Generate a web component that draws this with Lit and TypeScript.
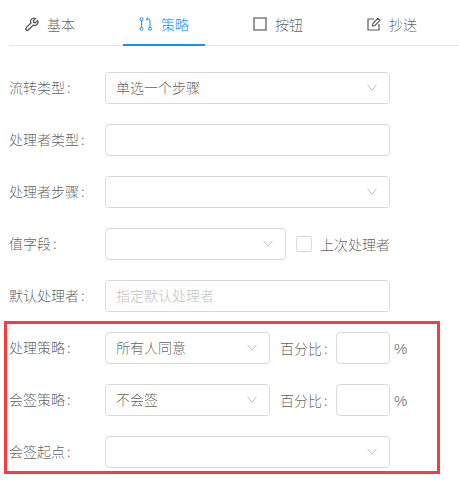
import { LitElement, html, css, svg } from "lit";
import { customElement } from "lit/decorators.js";

const chevron = html`<svg class="chev" viewBox="0 0 10 7" width="10" height="7"><path d="M.5.8 5 6.200 9.500.8" fill="none" stroke="currentColor" stroke-width="1"/></svg>`;

const icons = {
  tool: svg`<path d="M12.6 3.6 10.4 5.7 8.7 5.4 8.4 3.7 10.5 1.5C9 .8 7.3 1.2 6.3 2.4 5.5 3.4 5.3 4.8 5.9 6L1.3 10.6C.7 11.2.7 12.2 1.3 12.8 1.9 13.4 2.9 13.4 3.5 12.8L8.100 8.200C9.300 8.700 10.700 8.500 11.700 7.700 12.900 6.700 13.300 5.100 12.600 3.600Z" fill="none" stroke="currentColor" stroke-width="1.300"/>`,
  flow: svg`<g fill="none" stroke="currentColor" stroke-width="1"><circle cx="2.500" cy="2.200" r="1.500"/><circle cx="2.500" cy="11.800" r="1.500"/><circle cx="11" cy="11.800" r="1.500"/><path d="M2.500 3.700V10.300"/><path d="M11 10.300V3.200C11 2.500 10.500 2 9.800 2H7.500"/><path d="M9 .5 7.300 2 9 3.500"/></g>`,
  box: svg`<rect x="1" y="1" width="12" height="12" fill="none" stroke="currentColor" stroke-width="1.200"/>`,
  edit: svg`<g fill="none" stroke="currentColor" stroke-width="1.200"><path d="M7 2H1V13H12V7"/><path d="M5.500 9 5.900 6.500 10.900 1.300 13 3.300 8 8.500Z"/></g>`,
};

@customElement("app-root")
export class AppRoot extends LitElement {
  static styles = css`
    :host {
      display: block;
      position: relative;
      width: 459px;
      height: 484px;
      background: #fff;
      overflow: hidden;
      font-family: "Noto Sans CJK SC", "Noto Sans", sans-serif;
      font-size: 14px;
      font-weight: 300;
      color: rgba(0, 0, 0, 0.65);
    }
    .tabs {
      display: flex;
      gap: 32px;
      height: 46px;
      margin-left: 9px;
      box-sizing: border-box;
      border-bottom: 1px solid #e8e8e8;
    }
    .tab {
      width: 82px;
      height: 46px;
      box-sizing: border-box;
      display: flex;
      align-items: center;
      justify-content: center;
      gap: 8px;
      padding-top: 2px;
      line-height: 20px;
    }
    .tab.active {
      color: #1890ff;
      border-bottom: 2px solid #1890ff;
      padding-top: 4px;
    }
    .tab svg { width: 14px; height: 14px; flex: none; }
    .form {
      display: flex;
      flex-direction: column;
      gap: 20px;
      margin-top: 26px;
      padding-left: 9px;
    }
    .row {
      display: flex;
      align-items: center;
      height: 32px;
    }
    .label {
      width: 96px;
      flex: none;
      line-height: 30px;
      height: 32px;
      white-space: nowrap;
    }
    .colon { margin-left: 2px; }
    .ctl {
      box-sizing: border-box;
      height: 32px;
      width: 285px;
      flex: none;
      border: 1px solid #d9d9d9;
      border-radius: 4px;
      padding: 0 12px 2px 10px;
      display: flex;
      align-items: center;
      justify-content: space-between;
      line-height: 28px;
      background: #fff;
    }
    .ctl.half { width: 181px; }
    .ctl.mid { width: 165px; }
    .ctl.small { width: 54px; }
    .ph { color: #bfbfbf; }
    .chev { color: #bfbfbf; flex: none; }
    .check {
      width: 16px;
      height: 16px;
      box-sizing: border-box;
      border: 1px solid #d9d9d9;
      border-radius: 2px;
      margin-left: 10px;
      flex: none;
    }
    .checktext { margin-left: 8px; white-space: nowrap; }
    .pct { margin-left: 10px; width: 56px; flex: none; white-space: nowrap; }
    .unit { margin-left: 4px; font-family: "Liberation Sans", sans-serif; font-weight: 400; font-size: 15px; color: rgba(0, 0, 0, 0.5); }
    .highlight {
      position: absolute;
      left: 4px;
      top: 321px;
      width: 436px;
      height: 153px;
      box-sizing: border-box;
      border: 3px solid #f73c3c;
      pointer-events: none;
    }
  `;

  private tab(icon: unknown, text: string, active = false) {
    return html`<div class="tab ${active ? "active" : ""}">
      <svg viewBox="0 0 14 14">${icon}</svg><span>${text}</span>
    </div>`;
  }

  private label(text: string) {
    return html`<span class="label">${text}<span class="colon">:</span></span>`;
  }

  render() {
    return html`
      <div class="tabs">
        ${this.tab(icons.tool, "基本")}
        ${this.tab(icons.flow, "策略", true)}
        ${this.tab(icons.box, "按钮")}
        ${this.tab(icons.edit, "抄送")}
      </div>
      <div class="form">
        <div class="row">${this.label("流转类型")}<div class="ctl"><span>单选一个步骤</span>${chevron}</div></div>
        <div class="row">${this.label("处理者类型")}<div class="ctl"></div></div>
        <div class="row">${this.label("处理者步骤")}<div class="ctl"><span></span>${chevron}</div></div>
        <div class="row">
          ${this.label("值字段")}<div class="ctl half"><span></span>${chevron}</div>
          <span class="check"></span><span class="checktext">上次处理者</span>
        </div>
        <div class="row">${this.label("默认处理者")}<div class="ctl"><span class="ph">指定默认处理者</span></div></div>
        <div class="row">
          ${this.label("处理策略")}<div class="ctl mid"><span>所有人同意</span>${chevron}</div>
          <span class="pct">百分比<span class="colon">:</span></span><div class="ctl small"></div><span class="unit">%</span>
        </div>
        <div class="row">
          ${this.label("会签策略")}<div class="ctl mid"><span>不会签</span>${chevron}</div>
          <span class="pct">百分比<span class="colon">:</span></span><div class="ctl small"></div><span class="unit">%</span>
        </div>
        <div class="row">${this.label("会签起点")}<div class="ctl"><span></span>${chevron}</div></div>
      </div>
      <div class="highlight"></div>
    `;
  }
}
